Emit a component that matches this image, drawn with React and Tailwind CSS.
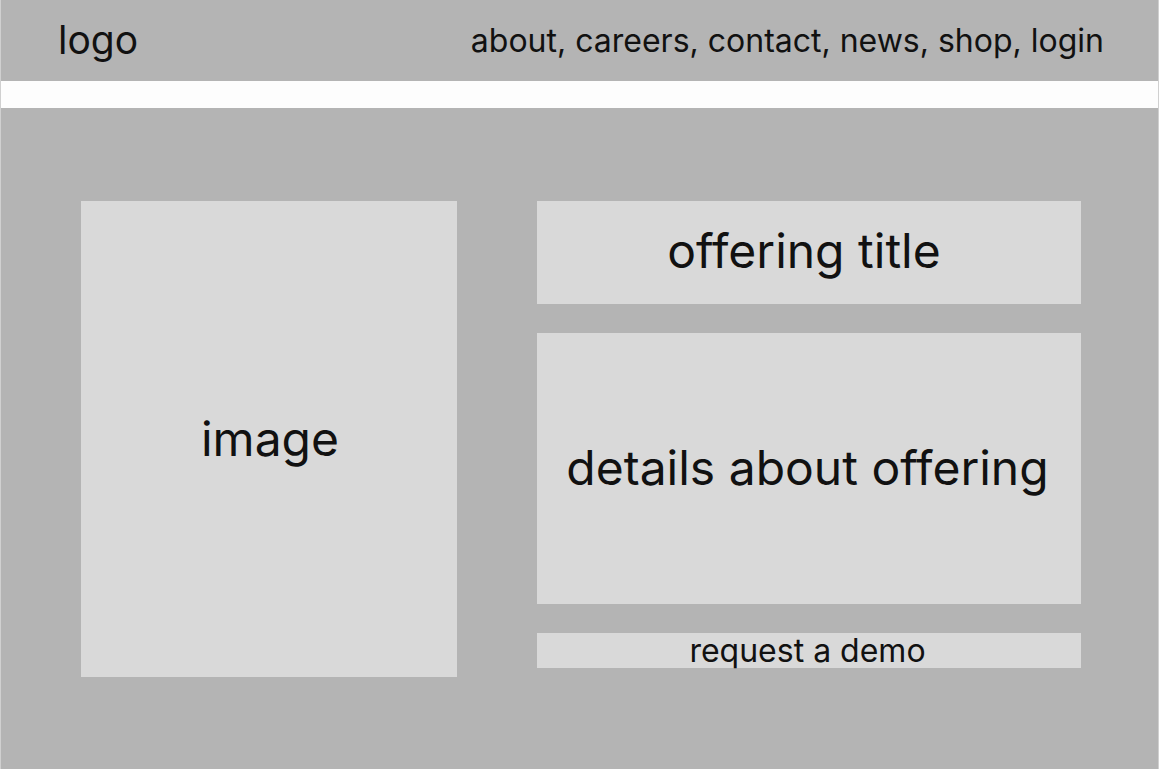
export default function App() {
  return (
    <div className="w-[1159px] h-[769px] flex flex-col bg-[#b4b4b4] border-x border-[#d0d0d0] text-[#111111] overflow-hidden" style={{ fontFamily: "Inter, 'Noto Sans', sans-serif" }}>
      <header className="h-[81px] shrink-0 flex items-center justify-between pl-[57px] pr-[55px]">
        <div className="text-[39px] leading-none pb-[3px]">logo</div>
        <nav className="text-[32px] leading-none pt-[1px] -mr-[1px]">about, careers, contact, news, shop, login</nav>
      </header>
      <div className="h-[27px] shrink-0 bg-[#fdfdfd]" />
      <main className="flex-1 flex pl-[80px] pt-[93px] gap-[80px]">
        <div className="w-[376px] h-[476px] bg-[#d9d9d9] flex items-center justify-center">
          <span className="text-[48px] leading-none pl-[2px]">image</span>
        </div>
        <div className="w-[544px] flex flex-col gap-[29px]">
          <div className="h-[103px] bg-[#d9d9d9] flex items-center justify-center">
            <span className="text-[48px] leading-none pb-[3px] pr-[10px]">offering title</span>
          </div>
          <div className="h-[271px] bg-[#d9d9d9] flex items-center justify-center">
            <span className="text-[48px] leading-none pb-[2px] pr-[3px]">details about offering</span>
          </div>
          <div className="h-[35px] bg-[#d9d9d9] flex items-center justify-center">
            <span className="text-[32px] leading-none pr-[3px]">request a demo</span>
          </div>
        </div>
      </main>
    </div>
  );
}
